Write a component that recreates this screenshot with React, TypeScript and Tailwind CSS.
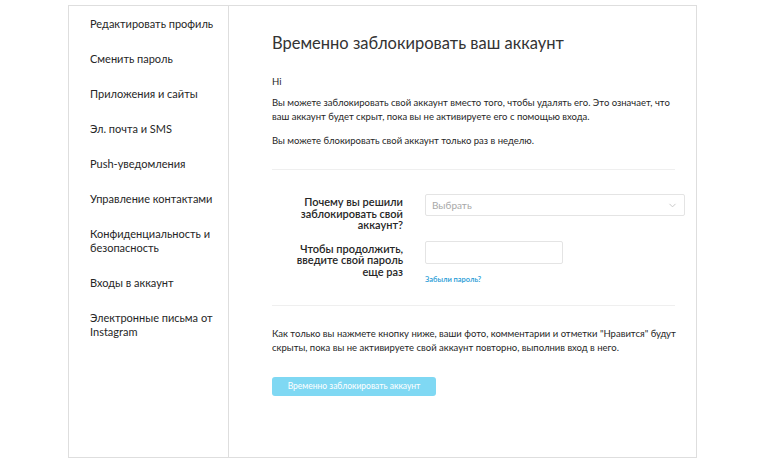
import { ChevronDown } from "lucide-react";

const menu = [
  "Редактировать профиль",
  "Сменить пароль",
  "Приложения и сайты",
  "Эл. почта и SMS",
  "Push-уведомления",
  "Управление контактами",
  "Конфиденциальность и безопасность",
  "Входы в аккаунт",
  "Электронные письма от Instagram",
];

export default function App() {
  return (
    <div className="w-[768px] h-[464px] bg-white pt-[5px] pl-[68px] text-[#262626] font-['Lato',sans-serif]">
      {/* settings box */}
      <div className="flex w-[629px] h-[453px] border border-[#dedede]">
        {/* sidebar */}
        <div className="w-[160px] shrink-0 border-r border-[#dedede] pt-[11px] pl-[21px] pr-[8px]">
          <ul className="flex flex-col gap-[21px] text-[11px] leading-[14px]">
            {menu.map((item) => (
              <li key={item} className="w-[125px]">
                {item}
              </li>
            ))}
          </ul>
        </div>

        {/* content */}
        <div className="flex-1 pl-[43px] pr-[10px]">
          <h1 className="mt-[25px] text-[16.5px] leading-[24px] font-normal text-[#333]">
            Временно заблокировать ваш аккаунт
          </h1>
          <p className="mt-[20px] text-[9.5px] leading-[14px]">Hi</p>
          <p className="mt-[7px] w-[410px] text-[9.5px] leading-[14px]">
            Вы можете заблокировать свой аккаунт вместо того, чтобы удалять его. Это означает, что
            ваш аккаунт будет скрыт, пока вы не активируете его с помощью входа.
          </p>
          <p className="mt-[10px] text-[9.5px] leading-[14px]">
            Вы можете блокировать свой аккаунт только раз в неделю.
          </p>

          <div className="mt-[21px] w-[403px] border-t border-[#efefef]"></div>

          {/* form */}
          <div className="mt-[24px] flex flex-col gap-[10px]">
            <div className="flex gap-[22px]">
              <label className="w-[131px] pl-[18px] pt-[2px] text-right text-[11px] leading-[11.5px] font-semibold">
                Почему вы решили заблокировать свой аккаунт?
              </label>
              <div className="flex items-center justify-between w-[260px] h-[22px] border border-[#e4e4e4] rounded-[2px] px-[6px] text-[10px] text-[#a8a8a8]">
                <span>Выбрать</span>
                <ChevronDown size={11} strokeWidth={2} className="text-[#c4c4c4]" />
              </div>
            </div>
            <div className="flex gap-[22px]">
              <label className="w-[131px] pl-[18px] pt-[2px] text-right text-[11px] leading-[11.5px] font-semibold">
                Чтобы продолжить, введите свой пароль еще раз
              </label>
              <div className="flex flex-col">
                <div className="w-[138px] h-[23px] border border-[#e4e4e4] rounded-[2px]"></div>
                <a href="#" className="mt-[11px] text-[7.5px] leading-[10px] font-semibold text-[#1d9ad6]">
                  Забыли пароль?
                </a>
              </div>
            </div>
          </div>

          <div className="mt-[20px] w-[403px] border-t border-[#efefef]"></div>

          <p className="mt-[21px] w-[410px] text-[9.5px] leading-[14px]">
            Как только вы нажмете кнопку ниже, ваши фото, комментарии и отметки "Нравится" будут
            скрыты, пока вы не активируете свой аккаунт повторно, выполнив вход в него.
          </p>

          <button className="mt-[22px] h-[19px] w-[164px] rounded-[3px] bg-[#7fd8f3] text-[8.5px] text-white">
            Временно заблокировать аккаунт
          </button>
        </div>
      </div>
    </div>
  );
}
